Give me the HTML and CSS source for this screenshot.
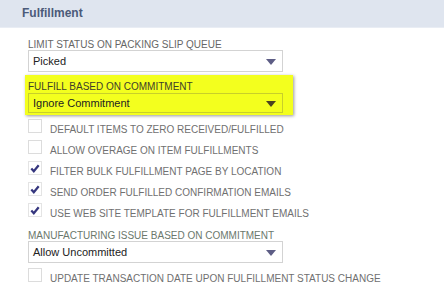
FILE: index.html
```html
<!DOCTYPE html>
<html>
<head>
<meta charset="utf-8">
<link rel="stylesheet" href="styles.css">
</head>
<body>
<div class="header">Fulfillment</div>
<div class="content">
  <div class="field first">
    <div class="label">LIMIT STATUS ON PACKING SLIP QUEUE</div>
    <div class="select"><span>Picked</span><i class="arrow"></i></div>
  </div>
  <div class="highlight">
    <div class="label dark">FULFILL BASED ON COMMITMENT</div>
    <div class="select hl"><span>Ignore Commitment</span><i class="arrow"></i></div>
  </div>
  <div class="checks">
    <div class="row"><span class="cb"></span><span class="txt">DEFAULT ITEMS TO ZERO RECEIVED/FULFILLED</span></div>
    <div class="row"><span class="cb"></span><span class="txt">ALLOW OVERAGE ON ITEM FULFILLMENTS</span></div>
    <div class="row"><span class="cb on"><svg viewBox="0 0 13 13" width="13" height="13"><path d="M2.5 6.5 L5.2 9.5 L10.5 3" fill="none" stroke="#35367e" stroke-width="2.4"/></svg></span><span class="txt">FILTER BULK FULFILLMENT PAGE BY LOCATION</span></div>
    <div class="row"><span class="cb on"><svg viewBox="0 0 13 13" width="13" height="13"><path d="M2.5 6.5 L5.2 9.5 L10.5 3" fill="none" stroke="#35367e" stroke-width="2.4"/></svg></span><span class="txt">SEND ORDER FULFILLED CONFIRMATION EMAILS</span></div>
    <div class="row"><span class="cb on"><svg viewBox="0 0 13 13" width="13" height="13"><path d="M2.5 6.5 L5.2 9.5 L10.5 3" fill="none" stroke="#35367e" stroke-width="2.4"/></svg></span><span class="txt">USE WEB SITE TEMPLATE FOR FULFILLMENT EMAILS</span></div>
  </div>
  <div class="field mfg">
    <div class="label green">MANUFACTURING ISSUE BASED ON COMMITMENT</div>
    <div class="select"><span>Allow Uncommitted</span><i class="arrow"></i></div>
  </div>
  <div class="row last"><span class="cb"></span><span class="txt">UPDATE TRANSACTION DATE UPON FULFILLMENT STATUS CHANGE</span></div>
</div>
</body>
</html>
```
FILE: styles.css
```css
* { box-sizing: border-box; }
html, body { margin: 0; padding: 0; background: #fff; }
body {
  width: 444px;
  height: 289px;
  overflow: hidden;
  font-family: "Liberation Sans", Arial, sans-serif;
}
.header {
  height: 28px;
  background: #dfe5ef;
  border-bottom: 1px solid #e9edf4;
  color: #4b5a79;
  font-weight: bold;
  font-size: 12px;
  line-height: 27px;
  padding-left: 22px;
}
.content {
  padding-left: 28px;
  display: flex;
  flex-direction: column;
}
.field.first { margin-top: 11px; }
.label {
  font-size: 10px;
  line-height: 11px;
  color: #666;
}
.label.dark { color: #3d3d2a; }
.label.green { color: #6b786c; }
.select {
  width: 255px;
  height: 22px;
  border: 1px solid #d3d3d3;
  background: #fff;
  display: flex;
  align-items: center;
  justify-content: space-between;
  padding: 0 6px 0 4px;
  font-size: 11px;
  color: #222;
}
.arrow {
  width: 0;
  height: 0;
  border-left: 5px solid transparent;
  border-right: 5px solid transparent;
  border-top: 6px solid #5d5d85;
  margin-top: 1px;
}
.highlight {
  margin: 3px 0 0 -3px;
  width: 268px;
  background: #f3ff1e;
  padding: 6px 9px 2px 3px;
  box-shadow: 1px 1px 3px rgba(0,0,0,0.4);
}
.highlight .label { margin-bottom: 1px; }
.select.hl {
  height: 20px;
  background: #f3ff1e;
  border-color: #c8cf2a;
}
.select.hl .arrow { border-top-color: #4a4320; }
.checks {
  margin-top: 4px;
  display: flex;
  flex-direction: column;
}
.row {
  display: flex;
  align-items: flex-start;
  height: 21px;
}
.cb {
  width: 14px;
  height: 14px;
  border: 1px solid #dcdcdc;
  background: #fff;
  flex: none;
  display: flex;
  align-items: center;
  justify-content: center;
}
.cb.on { border-color: #e4e4e4; }
.txt {
  margin-left: 8px;
  margin-top: 4px;
  font-size: 10px;
  line-height: 13px;
  color: #707070;
}
.mfg { margin-top: 6px; }
.row.last { margin-top: 5px; }
```
